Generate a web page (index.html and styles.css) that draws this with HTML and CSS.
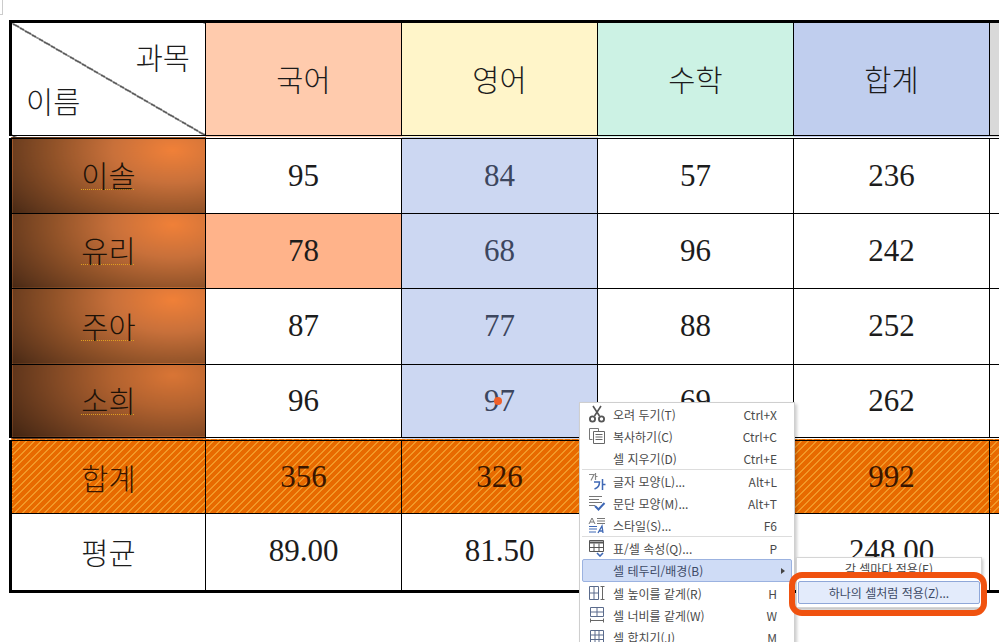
FILE: index.html
```html
<!DOCTYPE html>
<html lang="ko">
<head>
<meta charset="utf-8">
<title>표</title>
<link rel="stylesheet" href="styles.css">
</head>
<body>
<div class="corner"></div>
<main class="page">
<table class="score">
<colgroup><col class="c1"><col class="c2"><col class="c2"><col class="c2"><col class="c2"><col class="c6"></colgroup>
<tr class="head">
<th class="diag"><div class="diag-in"><span class="subj">과목</span><span class="nm">이름</span></div></th>
<th class="peach">국어</th><th class="lemon">영어</th><th class="mint">수학</th><th class="blue">합계</th><th class="gray"></th>
</tr>
<tr class="r r1"><th class="name n1"><u>이솔</u></th><td>95</td><td class="sel">84</td><td>57</td><td>236</td><td></td></tr>
<tr class="r r2"><th class="name n2"><u>유리</u></th><td class="hot">78</td><td class="sel">68</td><td>96</td><td>242</td><td></td></tr>
<tr class="r r3"><th class="name n3"><u>주아</u></th><td>87</td><td class="sel">77</td><td>88</td><td>252</td><td></td></tr>
<tr class="r r4"><th class="name n4"><u>소희</u></th><td>96</td><td class="sel">97</td><td>69</td><td>262</td><td></td></tr>
<tr class="total"><th>합계</th><td>356</td><td>326</td><td>310</td><td>992</td><td></td></tr>
<tr class="avg"><th>평균</th><td>89.00</td><td>81.50</td><td>77.50</td><td>248.00</td><td></td></tr>
</table>
</main>
<div class="dot"></div>

<nav class="menu">
<div class="item"><svg class="ico" viewBox="0 0 18 18"><path d="M5 1l6.500 10M13 1L6.500 11" fill="none" stroke="#555" stroke-width="1.6"/><circle cx="4.500" cy="14" r="2.6" fill="none" stroke="#555" stroke-width="1.8"/><circle cx="13.500" cy="14" r="2.6" fill="none" stroke="#555" stroke-width="1.8"/></svg><span class="lb">오려 두기(T)</span><span class="key">Ctrl+X</span></div>
<div class="item"><svg class="ico" viewBox="0 0 18 18"><path d="M1.500 1.500h9v3M1.500 1.500v11h3" fill="none" stroke="#777"/><path d="M5.500 4.500h11v12h-11z" fill="#fff" stroke="#666"/><path d="M7.500 7.500h7M7.500 10h7M7.500 12.500h7" stroke="#666"/></svg><span class="lb">복사하기(C)</span><span class="key">Ctrl+C</span></div>
<div class="item sep"><span class="ico"></span><span class="lb">셀 지우기(D)</span><span class="key">Ctrl+E</span></div>
<div class="item"><svg class="ico" viewBox="0 0 18 18"><path d="M1 2.500h5L3 8.500M7.500 1v7M7.500 4.500h2" fill="none" stroke="#888" stroke-width="1.200"/><path d="M6 10h5.500c0 3-2 6-5 7M14.500 7v11M14.500 12.500h3" fill="none" stroke="#3f68b5" stroke-width="1.500"/></svg><span class="lb">글자 모양(L)...</span><span class="key">Alt+L</span></div>
<div class="item"><svg class="ico" viewBox="0 0 18 18"><path d="M1 2.500h13M1 5.500h10M1 8.500h13M1 11.500h6" stroke="#777"/><path d="M7 12l3.500 3.500L16.500 9" fill="none" stroke="#3f68b5" stroke-width="2"/></svg><span class="lb">문단 모양(M)...</span><span class="key">Alt+T</span></div>
<div class="item sep"><svg class="ico" viewBox="0 0 18 18"><path d="M1 8l3-6 3 6M2 6h4" fill="none" stroke="#777"/><path d="M9 2.500h8M9 5h8M9 7.500h8" stroke="#777"/><path d="M1 10.500h8M1 13h8M1 16h7" stroke="#3f68b5"/><path d="M10 17l4-7 1 7M11.500 15h3" fill="none" stroke="#3f68b5" stroke-width="1.300"/></svg><span class="lb">스타일(S)...</span><span class="key">F6</span></div>
<div class="item"><svg class="ico" viewBox="0 0 18 18"><path d="M1.500 1.500h14v11h-14z" fill="#fff" stroke="#555"/><path d="M1.500 3.500h14" stroke="#555" stroke-width="2"/><path d="M1.500 8.500h14M6 4.500v8M11 4.500v8" stroke="#555"/><path d="M9 14l3 3 3-3" fill="none" stroke="#3f68b5" stroke-width="1.600"/></svg><span class="lb">표/셀 속성(Q)...</span><span class="key">P</span></div>
<div class="item active"><span class="ico"></span><span class="lb">셀 테두리/배경(B)</span><span class="arrow"></span></div>
<div class="item"><svg class="ico" viewBox="0 0 18 18"><path d="M1.500 2.500h9v13h-9zM6 2.500v13M1.500 9h9" fill="none" stroke="#5a6b8c"/><path d="M12.500 2.500h4M12.500 15.500h4M14.500 2.500v13" fill="none" stroke="#666"/></svg><span class="lb">셀 높이를 같게(R)</span><span class="key">H</span></div>
<div class="item"><svg class="ico" viewBox="0 0 18 18"><path d="M2.500 1.500h13v9h-13zM2.500 6h13M9 1.500v9" fill="none" stroke="#5a6b8c"/><path d="M2.500 12.500v4M15.500 12.500v4M2.500 14.500h13" fill="none" stroke="#666"/></svg><span class="lb">셀 너비를 같게(W)</span><span class="key">W</span></div>
<div class="item"><svg class="ico" viewBox="0 0 18 18"><path d="M2.500 2.500h13v13h-13zM2.500 7h13M2.500 11.500h13M7 2.500v13M11 2.500v13" fill="none" stroke="#5a6b8c"/></svg><span class="lb">셀 합치기(J)</span><span class="key">M</span></div>
</nav>

<div class="sub">
<div class="sub-item">각 셀마다 적용(E)</div>
<div class="sub-item on">하나의 셀처럼 적용(Z)...</div>
</div>
<div class="ring"></div>
</body>
</html>
```
FILE: styles.css
```css
html, body { margin: 0; height: 100%; overflow: hidden; background: #fff; }
body { width: 999px; height: 642px; position: relative; font-family: "Liberation Serif", "Noto Sans CJK KR", serif; color: #111; }
.corner { position: absolute; left: 0; top: 0; width: 2px; height: 14px; border-right: 1px solid #ccc; border-bottom: 1px solid #ccc; }
.page { padding: 20px 0 0 9px; width: 1100px; }

.score { border-collapse: collapse; table-layout: fixed; width: 1041px; border-left: 3px solid #000; border-top: 3px solid #000; border-bottom: 3px solid #000; font-size: 31px; }
.score th, .score td { border: 1px solid #000; padding: 0; text-align: center; font-weight: 400; font-family: "Liberation Serif", "Noto Sans CJK KR", serif; color: #1c1c1c; }
.score th { font-family: "Noto Sans CJK KR", serif; font-size: 29.500px; font-weight: 300; }
.c1 { width: 195px; } .c2 { width: 196px; } .c6 { width: 60px; }

.head { height: 113px; }
.head th { border-bottom: 4px double #000; padding-bottom: 2px; }
.peach { background: #ffcbad; } .lemon { background: #fff5c9; } .mint { background: #ccf2e4; } .blue { background: #c0ceee; } .gray { background: #d9d9d9; }
.score .head th.diag { padding-bottom: 0; background: #fff linear-gradient(to top right, transparent calc(50% - .6px), #222 calc(50% - .6px), #222 calc(50% + .6px), transparent calc(50% + .6px)); }
.diag-in { display: flex; flex-direction: column; height: 112px; box-sizing: border-box; padding: 11px 15px 0 14px; line-height: 44px; }
.subj { text-align: right; }
.nm { text-align: left; }

.r { height: 75px; }
.r1, .r3 { height: 76px; }
.r4 th, .r4 td { border-bottom: 4px double #000; }
.score th.name { color: #1d1208; padding-bottom: 3px; }
.name u { text-decoration: underline dotted #e0a020 1px; text-underline-offset: 2px; }
.n1, .n2, .n3, .n4 { background: radial-gradient(ellipse 240px 130px at 83% 15%, #f08038 0, #c8703a 25%, #905228 50%, #5a331a 75%, #1e1006 100%); }
.n4 { background: radial-gradient(ellipse 240px 130px at 83% 15%, #d97535 0, #b2622f 25%, #804824 50%, #4f2c16 75%, #1a0e05 100%); }
.score td.sel { background: #ccd7f2; color: #3c465e; }
.hot { background: #ffb38a; }

.total { height: 74px; }
.score .total th, .score .total td { background: repeating-linear-gradient(135deg, #e86a00 0, #e86a00 4.500px, #fcc650 4.500px, #fcc650 5.300px); color: #3a1600; }
.avg { height: 78px; }
.score .avg th, .score .avg td { padding-bottom: 2px; }

.dot { position: absolute; left: 494px; top: 397px; width: 8px; height: 8px; border-radius: 50%; background: #f0602a; }

.menu { position: absolute; left: 579px; top: 402px; width: 216px; height: 250px; box-sizing: border-box; background: #fff; border: 1px solid #cfcfcf; box-shadow: 2px 2px 3px rgba(0,0,0,.2); padding: 0 2px; font-family: "Noto Sans CJK KR", sans-serif; font-size: 12px; color: #4a4a4a; }
.item { display: flex; align-items: center; height: 22px; padding-left: 6px; padding-right: 15px; box-sizing: border-box; }
.item.sep { border-bottom: 1px solid #ddd; height: 23px; }
.ico { width: 18px; height: 18px; flex: none; margin-right: 7px; }
.lb { flex: 1; white-space: nowrap; }
.key { flex: none; }
.active { background: #cfdcf6; border: 1px solid #9bb2e0; border-radius: 2px; height: 23px; padding-left: 5px; padding-right: 6px; color: #3d4a66; }
.arrow { width: 0; height: 0; border-left: 4px solid #444; border-top: 3px solid transparent; border-bottom: 3px solid transparent; }

.sub { position: absolute; left: 796px; top: 557px; width: 186px; height: 51px; box-sizing: border-box; background: #fff; border: 1px solid #d5d5d5; box-shadow: 1px 2px 3px rgba(0,0,0,.25); padding: 1px; font-family: "Noto Sans CJK KR", sans-serif; font-size: 12px; color: #4a4a4a; text-align: center; }
.sub-item { height: 20px; line-height: 20px; }
.sub-item.on { height: 23px; line-height: 21px; box-sizing: border-box; background: #e3ebfb; border: 1px solid #8fa7d8; border-radius: 2px; color: #3d4a66; margin-top: 2px; }
.ring { position: absolute; left: 789px; top: 572px; width: 198px; height: 44px; box-sizing: border-box; border: 6px solid #f0520f; border-radius: 13px; }
```
